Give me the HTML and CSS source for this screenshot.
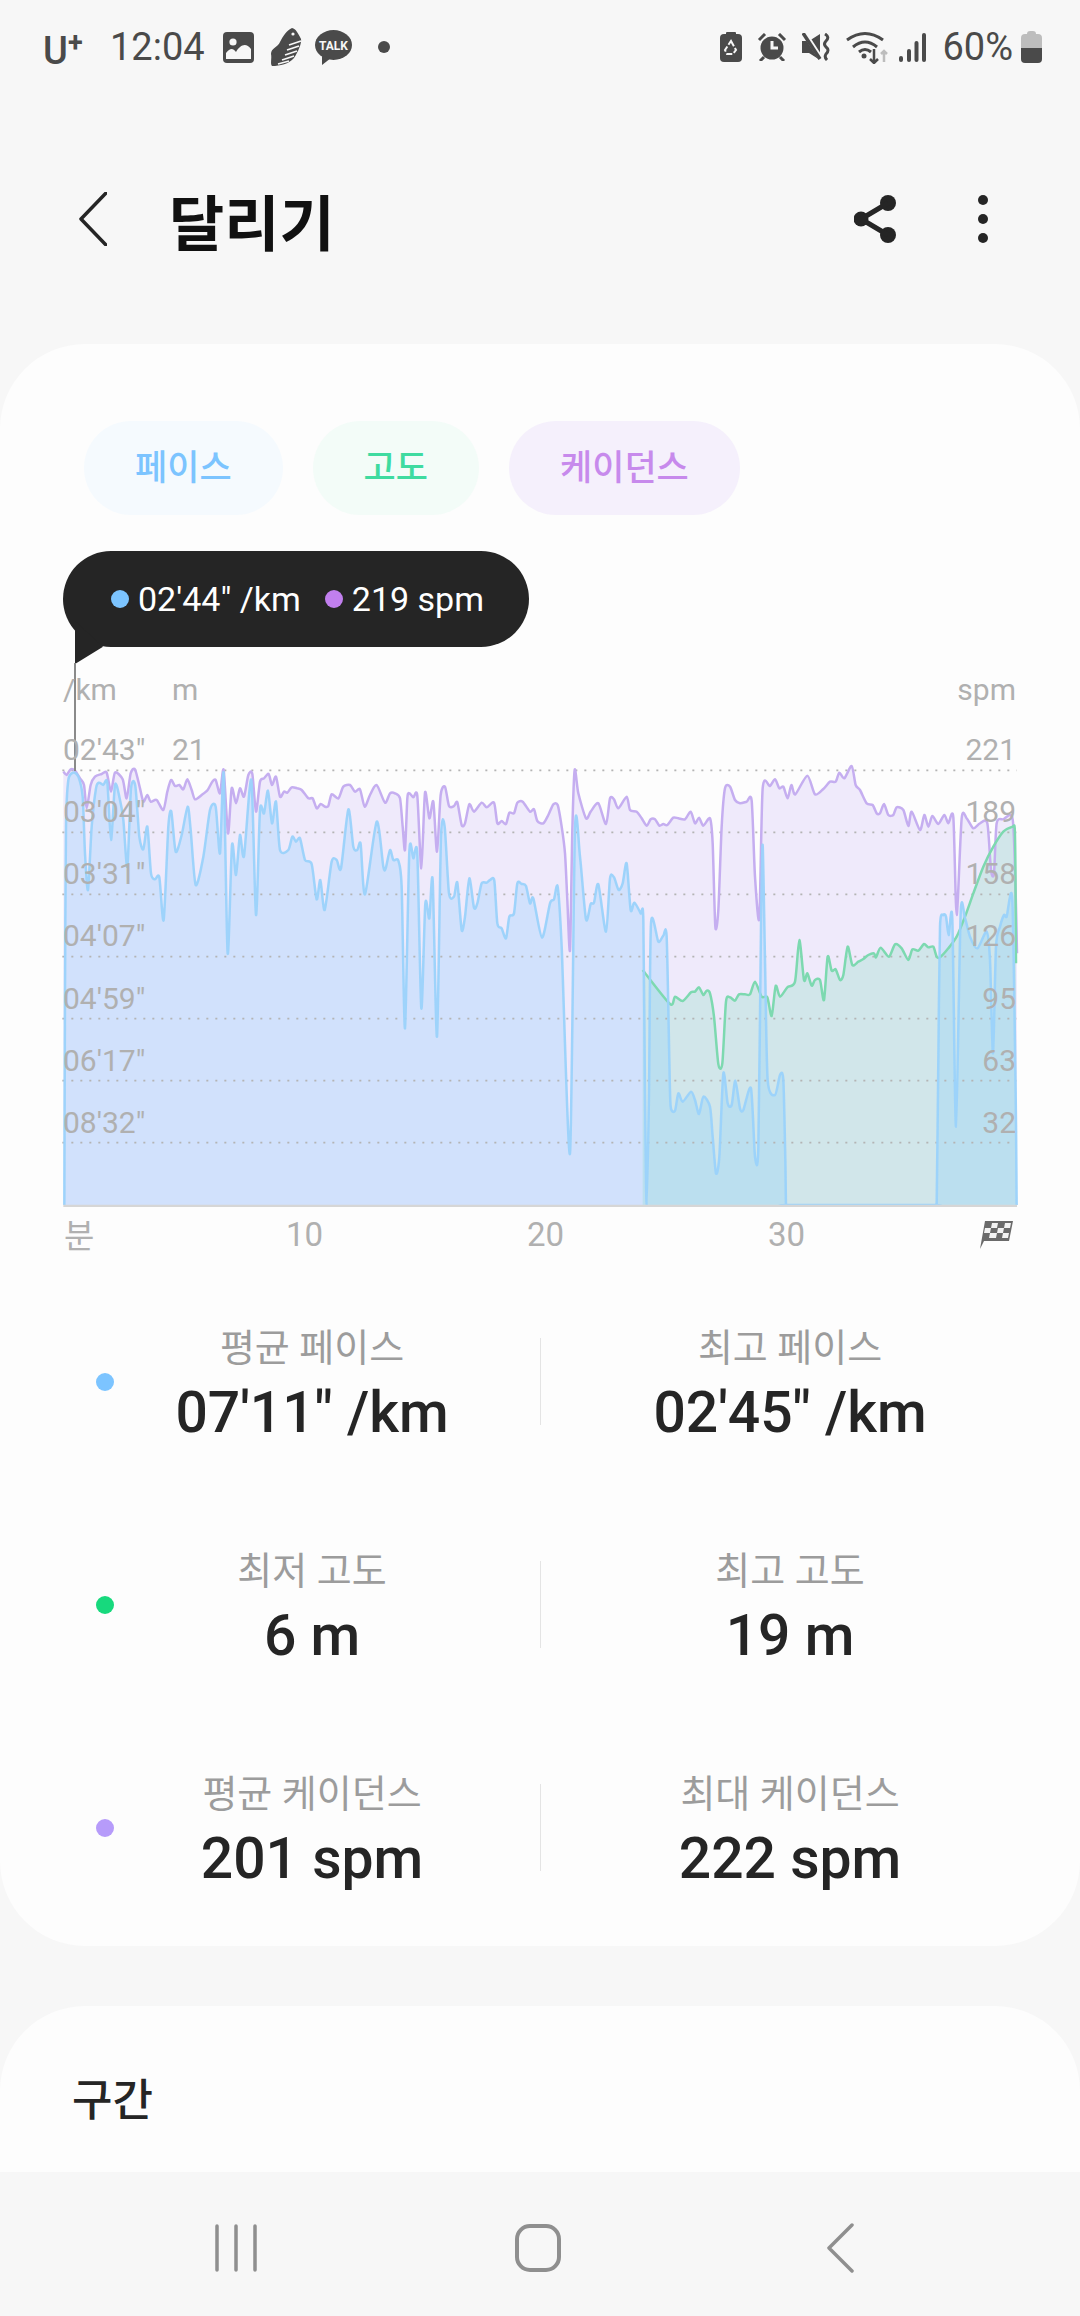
FILE: index.html
```html
<!DOCTYPE html>
<html lang="ko">
<head>
    <meta charset="UTF-8">
    <meta name="viewport" content="width=device-width, initial-scale=1.0">
    <title>달리기</title>
    <link rel="stylesheet" href="styles.css">
</head>
<body>
    <div class="status-bar">
        <div class="status-left">
            <span class="carrier">U<span class="carrier-plus">+</span></span>
            <span class="clock">12:04</span>
            <svg class="ic-gallery" width="31" height="31" viewBox="0 0 31 31">
                <rect width="31" height="31" rx="4" fill="#4a4a4a"/>
                <circle cx="10" cy="10" r="3.6" fill="#f7f7f7"/>
                <path d="M3 27V21C7 16 10 16 13 20C17 13 23 10 28 17V27Z" fill="#f7f7f7"/>
            </svg>
            <svg class="ic-shoe" width="32" height="38" viewBox="0 0 32 38">
                <path d="M22 0C26 1 28 5 31 11C32 15 28 24 24 30C19 36 10 38 2 38C0 36 2 30 1 26C1 20 8 19 10 14C13 8 17 2 22 0Z" fill="#4a4a4a"/>
                <path d="M31 13L19 17M29 18L17 22M27 23L15 27M24 28L12 32M19 33L8 36" stroke="#f7f7f7" stroke-width="1.6"/>
                <circle cx="23" cy="6" r="1.6" fill="#f7f7f7"/>
            </svg>
            <svg class="ic-talk" width="37" height="35" viewBox="0 0 37 35">
                <ellipse cx="18.500" cy="15" rx="18.500" ry="15" fill="#4a4a4a"/>
                <path d="M7 26L7 35L16 28Z" fill="#4a4a4a"/>
                <text x="18.500" y="19.500" text-anchor="middle" class="talk-text">TALK</text>
            </svg>
            <span class="status-dot"></span>
        </div>
        <div class="status-right">
            <svg width="22" height="30" viewBox="0 0 22 30">
                <rect x="6" width="10" height="4" rx="1" fill="#4a4a4a"/>
                <rect y="2" width="22" height="28" rx="4" fill="#4a4a4a"/>
                <path d="M11 9L16 18L13 22H7L5 18Z" fill="none" stroke="#f7f7f7" stroke-width="2" stroke-dasharray="6 2"/>
            </svg>
            <svg width="30" height="28" viewBox="0 0 30 28">
                <circle cx="15" cy="15" r="11.500" fill="#4a4a4a"/>
                <path d="M15 8V15H21" fill="none" stroke="#f7f7f7" stroke-width="3"/>
                <path d="M2 7L8 1M22 1L28 7M7 24L3 28M23 24L27 28" stroke="#4a4a4a" stroke-width="3"/>
            </svg>
            <svg width="29" height="28" viewBox="0 0 29 28">
                <path d="M0 8H7L18 1V27L7 20H0Z" fill="#4a4a4a"/>
                <path d="M3 1L20 27" stroke="#f7f7f7" stroke-width="5"/>
                <path d="M1 0L18 26" stroke="#4a4a4a" stroke-width="3.500"/>
                <path d="M23 1Q28 4 24 8Q21 11 24 14Q28 17 24 21Q22 24 25 27" fill="none" stroke="#4a4a4a" stroke-width="3"/>
            </svg>
            <svg width="44" height="33" viewBox="0 0 44 33">
                <path d="M1 9Q19 -4 37 9M7 16Q19 6 31 16M13 21Q19 16 25 21" fill="none" stroke="#4a4a4a" stroke-width="3"/>
                <circle cx="18" cy="25" r="2.500" fill="#4a4a4a"/>
                <path d="M28 18V32M24 28L28 32L32 28" fill="none" stroke="#4a4a4a" stroke-width="2.500"/>
                <path d="M38 31V20M35 23L38 20L41 23" fill="none" stroke="#bdbdbd" stroke-width="2.500"/>
            </svg>
            <svg class="ic-signal" width="27" height="29" viewBox="0 0 27 29">
                <rect y="23" width="4" height="6" rx="2" fill="#4a4a4a"/>
                <rect x="8" y="16" width="4" height="13" rx="2" fill="#4a4a4a"/>
                <rect x="15.500" y="8" width="4" height="21" rx="2" fill="#4a4a4a"/>
                <rect x="23" width="4" height="29" rx="2" fill="#4a4a4a"/>
            </svg>
            <span class="clock battery-text">60%</span>
            <svg class="ic-battery" width="21" height="32" viewBox="0 0 21 32">
                <path d="M6 3Q6 0 9 0H12Q15 0 15 3H17Q21 3 21 7V17H0V7Q0 3 4 3Z" fill="#bdbdbd"/>
                <path d="M0 17H21V28Q21 32 17 32H4Q0 32 0 28Z" fill="#4a4a4a"/>
            </svg>
        </div>
    </div>

    <div class="title-bar">
        <svg class="back-icon" width="28" height="54" viewBox="0 0 28 54">
            <path d="M27 1L2 27L27 53" fill="none" stroke="#252525" stroke-width="3.500" stroke-linecap="round" stroke-linejoin="round"/>
        </svg>
        <h1 class="page-title">달리기</h1>
        <svg class="share-icon" width="44" height="48" viewBox="0 0 44 48">
            <circle cx="7" cy="24" r="7.500" fill="#252525"/>
            <circle cx="34" cy="8" r="8" fill="#252525"/>
            <circle cx="34" cy="40" r="8" fill="#252525"/>
            <path d="M34 8L7 24L34 40" fill="none" stroke="#252525" stroke-width="5"/>
        </svg>
        <div class="more-icon"><i></i><i></i><i></i></div>
    </div>

    <div class="content">
        <section class="card">
            <div class="pills">
                <span class="pill pill-pace">페이스</span>
                <span class="pill pill-alt">고도</span>
                <span class="pill pill-cad">케이던스</span>
            </div>

            <div class="chart">
                <svg id="chartSvg" class="chart-svg" width="960" height="447" viewBox="180 0 2880 1341"></svg>
                <div class="x-axis">
                    <span class="x-cell x-first">분</span>
                    <span class="x-cell">10</span>
                    <span class="x-cell">20</span>
                    <span class="x-cell x-last">30</span>
                    <svg width="34" height="29" viewBox="0 0 34 29">
                        <path d="M6 1H34L30 21H5L1 29Z" fill="#6a6a6a"/>
                        <path d="M13 3H19L18 8H12ZM26 3H32L31 8H25ZM6 8H12L11 13H5ZM19 8H25L24 13H18ZM11 13H18L17 18H10ZM24 13H30L29 18H23Z" fill="#f2f2f2"/>
                    </svg>
                </div>

                <div class="tooltip">
                    <i class="dot dot-pace"></i><span class="tip-text">02'44" /km</span>
                    <i class="dot dot-cad tip-second"></i><span class="tip-text">219 spm</span>
                </div>
                <div class="pointer"></div>

                <div class="units">
                    <span class="unit-pace">/km</span>
                    <span>m</span>
                    <span class="unit-spm">spm</span>
                </div>
                <div class="axis axis-pace">
                    <span>02'43"</span><span>03'04"</span><span>03'31"</span><span>04'07"</span><span>04'59"</span><span>06'17"</span><span>08'32"</span>
                </div>
                <div class="axis axis-alt"><span>21</span></div>
                <div class="axis axis-cad">
                    <span>221</span><span>189</span><span>158</span><span>126</span><span>95</span><span>63</span><span>32</span>
                </div>
            </div>

            <div class="stats">
                <div class="stat-row">
                    <i class="dot dot-pace"></i>
                    <div class="stat stat-first"><span class="stat-label">평균 페이스</span><span class="stat-value">07'11" /km</span></div>
                    <div class="stat-line"></div>
                    <div class="stat"><span class="stat-label">최고 페이스</span><span class="stat-value">02'45" /km</span></div>
                </div>
                <div class="stat-row">
                    <i class="dot dot-alt"></i>
                    <div class="stat stat-first"><span class="stat-label">최저 고도</span><span class="stat-value">6 m</span></div>
                    <div class="stat-line"></div>
                    <div class="stat"><span class="stat-label">최고 고도</span><span class="stat-value">19 m</span></div>
                </div>
                <div class="stat-row">
                    <i class="dot dot-avg"></i>
                    <div class="stat stat-first"><span class="stat-label">평균 케이던스</span><span class="stat-value">201 spm</span></div>
                    <div class="stat-line"></div>
                    <div class="stat"><span class="stat-label">최대 케이던스</span><span class="stat-value">222 spm</span></div>
                </div>
            </div>
        </section>

        <section class="card card-laps">
            <h2 class="laps-title">구간</h2>
        </section>
    </div>

    <div class="nav-bar">
        <svg width="42" height="48" viewBox="0 0 42 48">
            <path d="M2 2V46M21 2V46M40 2V46" stroke="#8f8f8f" stroke-width="3.500" stroke-linecap="round"/>
        </svg>
        <svg class="nav-home" width="46" height="48" viewBox="0 0 46 48">
            <rect x="2" y="2" width="42" height="44" rx="13" fill="none" stroke="#8f8f8f" stroke-width="4"/>
        </svg>
        <svg class="nav-back" width="28" height="50" viewBox="0 0 28 50">
            <path d="M26 2L3 25L26 48" fill="none" stroke="#8f8f8f" stroke-width="3.500" stroke-linecap="round" stroke-linejoin="round"/>
        </svg>
    </div>

    <script src="chart.js"></script>
</body>
</html>
```

FILE: styles.css
```css
* {
    box-sizing: border-box;
}
body {
    margin: 0;
    width: 1080px;
    height: 2316px;
    overflow: hidden;
    display: flex;
    flex-direction: column;
    background: #f7f7f7;
    font-family: Roboto, "Noto Sans CJK KR", sans-serif;
    color: #252525;
}

/* status bar */
.status-bar {
    height: 94px;
    flex: none;
    display: flex;
    justify-content: space-between;
    align-items: center;
    padding: 0 38px 0 43px;
    color: #4a4a4a;
}
.status-left, .status-right {
    display: flex;
    align-items: center;
}
.status-right {
    gap: 15px;
}
.carrier {
    width: 40px;
    font-size: 38px;
    font-weight: 500;
    line-height: 38px;
    margin-right: 27px;
}
.carrier-plus {
    font-size: 27px;
    font-weight: 700;
    vertical-align: 12px;
}
.clock {
    font-size: 38px;
    line-height: 44px;
}
.ic-gallery {
    margin-left: 18px;
}
.ic-shoe {
    margin-left: 16px;
}
.ic-talk {
    margin-left: 13px;
}
.talk-text {
    font-size: 12px;
    font-weight: 700;
    fill: #f7f7f7;
}
.status-dot {
    width: 12px;
    height: 12px;
    margin-left: 26px;
    border-radius: 50%;
    background: #4a4a4a;
}
.ic-signal {
    margin-left: -6px;
}
.battery-text {
    margin-left: 1px;
}
.ic-battery {
    margin-left: -7px;
}

/* title bar */
.title-bar {
    height: 250px;
    flex: none;
    display: flex;
    align-items: center;
    padding: 0 92px 0 79px;
}
.page-title {
    margin: 0 0 0 62px;
    font-size: 60px;
    font-weight: 700;
    color: #111;
}
.share-icon {
    margin-left: auto;
}
.more-icon {
    display: flex;
    flex-direction: column;
    gap: 9px;
    margin-left: 80px;
}
.more-icon i {
    width: 10px;
    height: 10px;
    border-radius: 50%;
    background: #252525;
}

/* cards */
.content {
    flex: 1;
    min-height: 0;
    overflow: hidden;
}
.card {
    height: 1602px;
    background: #fdfdfd;
    border-radius: 85px;
}
.card-laps {
    height: 400px;
    margin-top: 60px;
    padding: 59px 0 0 72px;
}
.laps-title {
    margin: 0;
    font-size: 44px;
    font-weight: 500;
}

/* pills */
.pills {
    display: flex;
    gap: 30px;
    padding: 77px 0 0 84px;
}
.pill {
    height: 94px;
    padding: 0 51px;
    border-radius: 47px;
    line-height: 96px;
    font-size: 35px;
    font-weight: 500;
}
.pill-pace {
    color: #7cc4ff;
    background: #f5fafe;
}
.pill-alt {
    color: #3fdba0;
    background: #f3fcf8;
}
.pill-cad {
    color: #c78aec;
    background: #f5f0fc;
}

/* chart */
.chart {
    position: relative;
    height: 719px;
    margin-top: 36px;
    padding: 209px 0 0 60px;
}
.chart-svg {
    display: block;
}
.x-axis {
    display: flex;
    align-items: center;
    height: 40px;
    margin: 7px 0 0 4px;
    font-size: 33px;
    color: #b0b0b0;
}
.x-cell {
    width: 241px;
}
.x-first {
    width: 222px;
    font-size: 33px;
}
.x-last {
    width: 211px;
}
.tooltip {
    position: absolute;
    left: 63px;
    top: 0;
    width: 466px;
    height: 96px;
    padding-left: 48px;
    display: flex;
    align-items: center;
    border-radius: 48px;
    background: #252525;
    color: #fff;
    font-size: 34px;
}
.tooltip::after {
    content: "";
    position: absolute;
    left: 12px;
    top: 70px;
    width: 28px;
    height: 43px;
    background: #252525;
    clip-path: polygon(0 0, 100% 60%, 100% 60%, 0 100%);
}
.tip-text {
    margin-left: 9px;
}
.tip-second {
    margin-left: 24px;
}
.pointer {
    position: absolute;
    left: 74px;
    top: 112px;
    width: 2px;
    height: 108px;
    background: #8a8a8a;
}
.units {
    position: absolute;
    left: 63px;
    right: 64px;
    top: 121px;
    display: flex;
    font-size: 30px;
    line-height: 36px;
    color: #b0b0b0;
}
.unit-pace {
    width: 109px;
}
.unit-spm {
    margin-left: auto;
}
.axis {
    position: absolute;
    top: 168px;
    display: flex;
    flex-direction: column;
    font-size: 30px;
    color: #b0b0b0;
}
.axis span {
    height: 62.170px;
    line-height: 62.170px;
}
.axis-pace {
    left: 63px;
}
.axis-alt {
    left: 172px;
}
.axis-cad {
    right: 64px;
    text-align: right;
}

/* stats */
.dot {
    flex: none;
    width: 18px;
    height: 18px;
    border-radius: 50%;
}
.dot-pace {
    background: #7cc4ff;
}
.dot-cad {
    background: #c17fee;
}
.dot-alt {
    background: #17d97d;
}
.dot-avg {
    background: #b69bfa;
}
.stat-row {
    height: 223px;
    display: flex;
    align-items: center;
    padding-left: 96px;
}
.stat {
    width: 498px;
    padding-top: 14px;
    display: flex;
    flex-direction: column;
    align-items: center;
}
.stat-first {
    width: 396px;
    margin-right: 30px;
}
.stat-line {
    flex: none;
    width: 1px;
    height: 87px;
    background: #e4e4e4;
}
.stat-label {
    font-size: 38px;
    line-height: 48px;
    color: #9c9c9c;
}
.stat-value {
    font-size: 57px;
    font-weight: 500;
    line-height: 82px;
}

/* bottom navigation */
.nav-bar {
    height: 144px;
    flex: none;
    display: flex;
    align-items: center;
    padding: 8px 0 0 215px;
    background: #f7f7f7;
}
.nav-home {
    margin-left: 258px;
}
.nav-back {
    margin-left: 265px;
}
```

FILE: chart.js
```javascript
// traced samples, each part is in 1/3 px units from its own x offset
const purple = [
    [180, [[10,35],[20,45],[32,28],[45,32],[60,55],[72,75],[80,145],[92,75],[105,50],[125,42],[140,38],[153,95],[165,38],[188,58],[200,115],[212,40],[225,28],[240,85],[250,125],[262,105],[272,125],[290,120],[310,150],[322,95],[333,60],[345,78],[358,75],[370,88],[382,58],[395,90],[405,118],[425,105],[443,90],[457,65],[467,60],[480,100],[491,30],[504,220],[515,85],[528,130],[540,85],[552,110],[565,45],[577,42],[588,155],[600,65],[612,55],[626,42],[636,75],[648,50],[660,110],[672,95],[682,98],[695,82],[712,85],[725,90],[745,115],[758,115],[770,145],[782,132],[795,140],[805,138],[815,103],[835,115],[850,80],[870,75],[885,95],[900,88],[914,140],[930,105],[950,75],[975,128],[990,100]]],
    [1140, [[45,100],[60,115],[68,200],[75,270],[82,115],[88,100],[100,112],[112,108],[124,325],[135,98],[148,175],[160,125],[171,275],[182,105],[195,80],[207,138],[222,138],[232,127],[245,195],[255,190],[268,133],[282,155],[305,128],[320,142],[342,128],[352,190],[365,183],[378,192],[388,158],[402,160],[412,128],[428,125],[450,155],[462,148],[472,183],[490,190],[505,165],[520,133],[533,135],[545,200],[555,280],[562,420],[570,570],[577,210],[584,30],[595,100],[618,175],[632,155],[655,130],[678,192],[690,115],[702,118],[715,145],[740,110],[750,150],[770,155],[785,175],[800,197],[812,178],[825,178],[838,197],[850,192],[862,195],[880,173],[895,175],[915,178],[932,155],[945,190],[957,173],[970,197],[990,175]]],
    [2070, [[68,250],[76,500],[85,450],[95,200],[105,85],[120,80],[135,120],[150,130],[170,125],[185,122],[195,350],[208,475],[218,85],[240,78],[255,58],[268,85],[280,80],[293,115],[304,75],[316,103],[352,47],[375,103],[400,87],[420,65],[437,65],[448,38],[463,55],[485,18],[497,75],[510,90],[530,130],[548,135],[560,160],[570,160],[582,132],[595,165],[610,165],[620,142],[640,150],[655,198],[665,155],[690,210],[703,165],[715,200],[727,168],[745,192],[763,165],[775,190],[790,172],[800,465],[815,175],[830,175],[850,205],[870,190],[892,190],[903,330],[912,340],[920,190],[940,178],[968,178],[977,400],[981,580]]]
];
const blue = [
    [180, [[13,1335],[15,700],[18,200],[25,60],[40,38],[55,50],[68,110],[75,280],[84,390],[95,200],[108,85],[117,68],[130,75],[142,68],[153,240],[165,75],[178,110],[190,180],[202,320],[213,85],[226,78],[238,230],[250,268],[262,200],[273,340],[285,358],[298,352],[311,480],[325,200],[334,155],[347,275],[365,225],[383,140],[392,210],[407,375],[430,290],[450,150],[467,140],[480,280],[491,40],[503,580],[516,255],[528,345],[540,225],[552,288],[574,60],[588,465],[600,150],[612,160],[624,92],[636,190],[648,125],[660,270],[685,270],[697,230],[708,245],[720,235],[735,300],[755,312],[770,418],[781,360],[794,450],[815,305],[830,300],[843,325],[865,148],[880,260],[892,270],[902,252],[915,403],[950,185],[970,320],[977,325],[990,270]]],
    [1140, [[40,300],[55,302],[65,380],[75,805],[88,275],[100,295],[112,283],[124,745],[136,430],[148,475],[158,360],[171,830],[183,230],[194,200],[207,400],[222,410],[232,368],[245,510],[255,470],[268,355],[282,443],[292,430],[305,370],[320,368],[330,360],[343,362],[352,490],[365,505],[378,535],[388,470],[402,460],[412,370],[425,372],[438,378],[450,430],[460,415],[486,533],[510,430],[522,418],[533,380],[545,560],[570,1180],[585,205],[600,290],[618,478],[632,432],[642,428],[655,373],[678,515],[690,355],[702,352],[716,390],[728,370],[740,310],[752,450],[763,428],[782,460],[790,480],[795,1000],[800,1340],[807,1000],[813,490],[835,545],[850,527],[860,530],[868,900],[872,1040],[885,1052],[895,1000],[908,1025],[933,995],[945,1020],[957,1062],[970,1010],[990,1040]]],
    [2070, [[68,1130],[78,1240],[88,1190],[100,940],[113,1030],[125,1035],[136,962],[150,1045],[160,1050],[183,985],[195,1190],[205,1160],[213,500],[218,255],[225,600],[233,960],[255,1005],[270,945],[280,960],[286,1200],[288,1335],[292,1335],[736,1335],[740,1335],[745,900],[750,500],[760,465],[768,470],[776,525],[787,478],[798,1100],[812,460],[825,475],[840,530],[862,565],[890,515],[900,600],[909,880],[918,560],[930,500],[942,465],[950,470],[967,420],[977,1000],[980,1335]]]
];
const green = [
    [1140, [[788,630],[870,732],[885,710],[908,723],[933,697],[945,695],[957,682],[970,705],[980,692],[990,700]]],
    [2070, [[72,770],[85,912],[97,910],[108,725],[120,712],[135,722],[147,703],[165,703],[180,703],[195,665],[215,710],[232,712],[245,768],[257,678],[270,710],[292,682],[315,665],[328,540],[342,660],[352,640],[365,677],[375,660],[390,660],[402,720],[413,590],[425,632],[437,628],[450,660],[460,645],[473,560],[487,615],[505,605],[520,597],[535,585],[552,580],[558,592],[572,563],[597,590],[615,553],[635,565],[655,600],[667,568],[685,572],[702,552],[715,562],[730,560],[740,590],[750,592],[775,565],[800,530],[825,470],[850,400],[880,320],[910,260],[940,215],[968,200],[974,203],[976,300],[978,610]]]
];

const BASE = 1335;
const gridY = [31, 217, 403, 590, 776, 962, 1148];
const svg = document.getElementById('chartSvg');

function flatten(parts) {
    const pts = [];
    parts.forEach(function(part) {
        part[1].forEach(function(p) {
            pts.push([p[0] + part[0], p[1]]);
        });
    });
    return pts;
}

// smooth line through the samples
function linePath(pts) {
    let d = 'M' + pts[0][0] + ' ' + pts[0][1];
    for (let i = 0; i < pts.length - 1; i++) {
        const p0 = pts[Math.max(i - 1, 0)];
        const p1 = pts[i];
        const p2 = pts[i + 1];
        const p3 = pts[Math.min(i + 2, pts.length - 1)];
        const c1x = p1[0] + (p2[0] - p0[0]) / 8;
        const c1y = p1[1] + (p2[1] - p0[1]) / 8;
        const c2x = p2[0] - (p3[0] - p1[0]) / 8;
        const c2y = p2[1] - (p3[1] - p1[1]) / 8;
        d += 'C' + c1x + ' ' + c1y + ' ' + c2x + ' ' + c2y + ' ' + p2[0] + ' ' + p2[1];
    }
    return d;
}

function addPath(d, attrs) {
    const el = document.createElementNS('http://www.w3.org/2000/svg', 'path');
    el.setAttribute('d', d);
    for (const k in attrs) {
        el.setAttribute(k, attrs[k]);
    }
    svg.appendChild(el);
}

function addArea(pts, fill, opacity) {
    const d = linePath(pts) + 'L' + pts[pts.length - 1][0] + ' ' + BASE + 'L' + pts[0][0] + ' ' + BASE + 'Z';
    addPath(d, { fill: fill, 'fill-opacity': opacity });
}

const purplePts = flatten(purple);
const greenPts = flatten(green);
const bluePts = flatten(blue);

addArea(purplePts, '#efeafb', 1);
addArea(greenPts, '#3fd89a', 0.17);
addArea(bluePts, '#80ccff', 0.27);

gridY.forEach(function(y) {
    addPath('M187 ' + y + 'H3050', { stroke: '#b4b4b4', 'stroke-width': 5, 'stroke-dasharray': '6 21' });
});

addPath(linePath(purplePts), { fill: 'none', stroke: '#c5aef0', 'stroke-width': 7.5 });
addPath(linePath(greenPts), { fill: 'none', stroke: '#7dd9b0', 'stroke-width': 7.5 });
addPath(linePath(bluePts), { fill: 'none', stroke: '#9ad2fb', 'stroke-opacity': 0.95, 'stroke-width': 7.5 });

// x axis line
addPath('M190 1338H3051', { stroke: '#d6d6d6', 'stroke-width': 8 });
```
